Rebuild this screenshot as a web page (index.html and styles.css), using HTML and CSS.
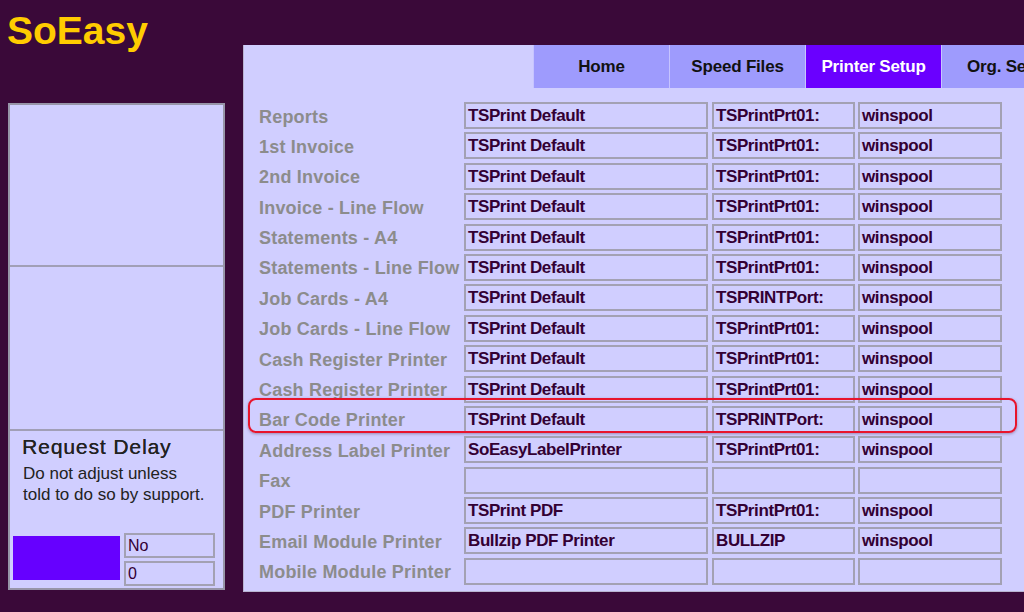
FILE: index.html
```html
<!DOCTYPE html>
<html>
<head>
<meta charset="utf-8">
<title>SoEasy - Printer Setup</title>
<link rel="stylesheet" href="styles.css">
</head>
<body>
<div class="page">
  <aside class="sidebar">
    <div class="logo">SoEasy</div>
    <div class="side-panel">
      <div class="side-sec sec1"></div>
      <div class="side-sec sec2"></div>
      <div class="side-sec sec3">
        <div class="rd-title">Request Delay</div>
        <div class="rd-text">Do not adjust unless<br>told to do so by support.</div>
        <div class="rd-controls">
          <div class="rd-box"></div>
          <div class="rd-inputs">
            <div class="rd-input">No</div>
            <div class="rd-input">0</div>
          </div>
        </div>
      </div>
    </div>
  </aside>
  <main class="main">
    <nav class="tabs">
      <div class="tab">Home</div>
      <div class="tab">Speed Files</div>
      <div class="tab active">Printer Setup</div>
      <div class="tab">Org. Setup</div>
    </nav>
    <div class="rows">
      <div class="row"><div class="label">Reports</div><div class="f f1">TSPrint Default</div><div class="f f2">TSPrintPrt01:</div><div class="f f3">winspool</div></div>
      <div class="row"><div class="label">1st Invoice</div><div class="f f1">TSPrint Default</div><div class="f f2">TSPrintPrt01:</div><div class="f f3">winspool</div></div>
      <div class="row"><div class="label">2nd Invoice</div><div class="f f1">TSPrint Default</div><div class="f f2">TSPrintPrt01:</div><div class="f f3">winspool</div></div>
      <div class="row"><div class="label">Invoice - Line Flow</div><div class="f f1">TSPrint Default</div><div class="f f2">TSPrintPrt01:</div><div class="f f3">winspool</div></div>
      <div class="row"><div class="label">Statements - A4</div><div class="f f1">TSPrint Default</div><div class="f f2">TSPrintPrt01:</div><div class="f f3">winspool</div></div>
      <div class="row"><div class="label">Statements - Line Flow</div><div class="f f1">TSPrint Default</div><div class="f f2">TSPrintPrt01:</div><div class="f f3">winspool</div></div>
      <div class="row"><div class="label">Job Cards - A4</div><div class="f f1">TSPrint Default</div><div class="f f2">TSPRINTPort:</div><div class="f f3">winspool</div></div>
      <div class="row"><div class="label">Job Cards - Line Flow</div><div class="f f1">TSPrint Default</div><div class="f f2">TSPrintPrt01:</div><div class="f f3">winspool</div></div>
      <div class="row"><div class="label">Cash Register Printer</div><div class="f f1">TSPrint Default</div><div class="f f2">TSPrintPrt01:</div><div class="f f3">winspool</div></div>
      <div class="row"><div class="label">Cash Register Printer</div><div class="f f1">TSPrint Default</div><div class="f f2">TSPrintPrt01:</div><div class="f f3">winspool</div></div>
      <div class="row highlighted"><div class="label">Bar Code Printer</div><div class="f f1">TSPrint Default</div><div class="f f2">TSPRINTPort:</div><div class="f f3">winspool</div><div class="highlight"></div></div>
      <div class="row"><div class="label">Address Label Printer</div><div class="f f1">SoEasyLabelPrinter</div><div class="f f2">TSPrintPrt01:</div><div class="f f3">winspool</div></div>
      <div class="row"><div class="label">Fax</div><div class="f f1"></div><div class="f f2"></div><div class="f f3"></div></div>
      <div class="row"><div class="label">PDF Printer</div><div class="f f1">TSPrint PDF</div><div class="f f2">TSPrintPrt01:</div><div class="f f3">winspool</div></div>
      <div class="row"><div class="label">Email Module Printer</div><div class="f f1">Bullzip PDF Printer</div><div class="f f2">BULLZIP</div><div class="f f3">winspool</div></div>
      <div class="row"><div class="label">Mobile Module Printer</div><div class="f f1"></div><div class="f f2"></div><div class="f f3"></div></div>
    </div>
  </main>
</div>
</body>
</html>
```
FILE: styles.css
```css
html, body {
  margin: 0;
  padding: 0;
  background: #3a0939;
  overflow: hidden;
}
body {
  width: 1024px;
  height: 612px;
  font-family: "Liberation Sans", Arial, sans-serif;
}
.page {
  display: flex;
  align-items: flex-start;
  width: 1024px;
  height: 612px;
  overflow: hidden;
}
.sidebar {
  flex: 0 0 243px;
  width: 243px;
  padding-left: 8px;
  box-sizing: border-box;
}
.logo {
  margin-top: 11px;
  margin-left: -1px;
  height: 39px;
  line-height: 39px;
  font-size: 39px;
  font-weight: bold;
  color: #ffcc00;
}
.side-panel {
  margin-top: 53px;
  width: 217px;
  box-sizing: border-box;
  border: 2px solid #9795a8;
  background: #d0ceff;
}
.side-sec {
  box-sizing: border-box;
}
.sec1 {
  height: 162px;
  border-bottom: 2px solid #a19fb6;
}
.sec2 {
  height: 164px;
  border-bottom: 2px solid #a19fb6;
}
.sec3 {
  height: 157px;
  display: flex;
  flex-direction: column;
  padding: 4px 8px 2px 3px;
}
.rd-title {
  padding-left: 9px;
  font-size: 21px;
  line-height: 24px;
  letter-spacing: 0.9px;
  color: #222;
  text-shadow: 0.3px 0 0 #222;
}
.rd-text {
  padding-left: 10px;
  margin-top: 3.5px;
  font-size: 17px;
  line-height: 21px;
  color: #222;
}
.rd-controls {
  margin-top: auto;
  display: flex;
  align-items: flex-start;
  gap: 4px;
}
.rd-box {
  margin-top: 3px;
  width: 107px;
  height: 44px;
  background: #6600ff;
}
.rd-inputs {
  display: flex;
  flex-direction: column;
  gap: 3px;
}
.rd-input {
  width: 91px;
  height: 25px;
  box-sizing: border-box;
  border: 2px solid #a3a1b3;
  padding-left: 2px;
  font-size: 16px;
  line-height: 21px;
  color: #330033;
}
.main {
  flex: 0 0 900px;
  margin-top: 45px;
  height: 547px;
  box-sizing: border-box;
  background: #d0ceff;
  border-left: 1px solid #b8b4d0;
  border-bottom: 1px solid #b8b4d0;
}
.tabs {
  display: flex;
  height: 43px;
  padding-left: 289px;
}
.tab {
  width: 136px;
  box-sizing: border-box;
  border-left: 1px solid #c6c4ff;
  background: #9e9bfd;
  display: flex;
  align-items: center;
  justify-content: center;
  font-size: 17px;
  letter-spacing: -0.2px;
  font-weight: bold;
  color: #111;
}
.tab.active {
  background: #6a00ff;
  color: #fff;
}
.rows {
  margin-top: 14px;
  padding-left: 15px;
  display: flex;
  flex-direction: column;
  gap: 3.4px;
}
.row {
  position: relative;
  display: flex;
  align-items: center;
  height: 27px;
}
.label {
  width: 205px;
  flex: 0 0 205px;
  padding-top: 3px;
  font-size: 18px;
  font-weight: bold;
  letter-spacing: 0.2px;
  color: #8c8c8c;
  white-space: nowrap;
  overflow: hidden;
}
.f {
  height: 27px;
  box-sizing: border-box;
  border: 2px solid #a3a1b3;
  padding-left: 2px;
  font-size: 17px;
  letter-spacing: -0.4px;
  line-height: 23px;
  font-weight: bold;
  color: #330033;
  white-space: nowrap;
  overflow: hidden;
}
.f1 { width: 244px; margin-right: 4px; }
.f2 { width: 143px; margin-right: 3px; }
.f3 { width: 144px; }
.highlight {
  position: absolute;
  left: -11px;
  top: -8px;
  width: 769px;
  height: 35px;
  box-sizing: border-box;
  border: 2px solid #e8142c;
  border-radius: 8px;
  box-shadow: 0 1px 3px rgba(60, 0, 40, 0.35);
  pointer-events: none;
}
```
